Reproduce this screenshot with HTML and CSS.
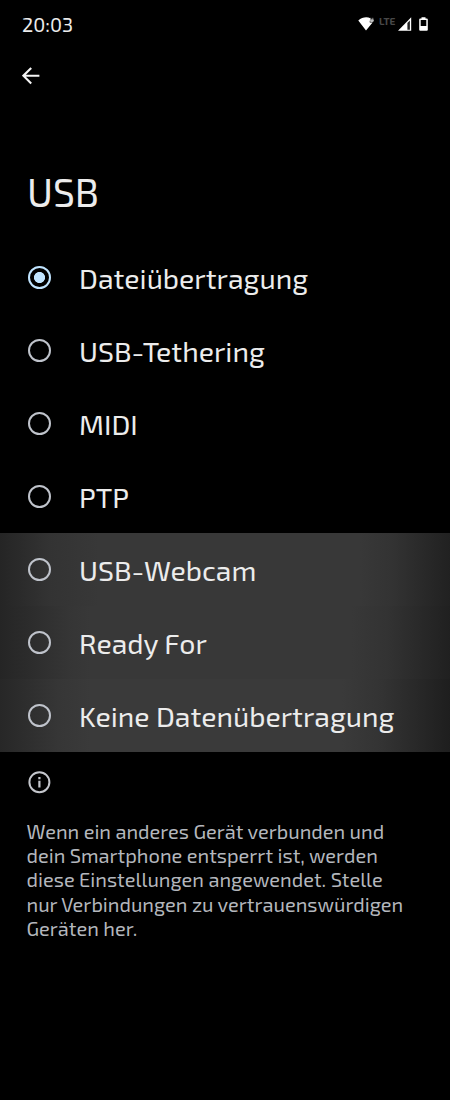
FILE: index.html
```html
<!DOCTYPE html>
<html lang="de">
<head>
  <meta charset="UTF-8" />
  <meta name="viewport" content="width=device-width, initial-scale=1.0" />
  <title>USB</title>
  <link rel="stylesheet" href="styles.css">
</head>
<body>
  <header class="status-bar">
    <span class="clock">20:03</span>
    <div class="status-icons">
      <svg class="wifi" width="17" height="15" viewBox="0 0 17 15">
        <path d="M0.3 3.6C4 -0.3 9.5 -0.5 12.4 1.2L11.6 5.2L14.2 6L8 13.6Z" fill="#fff" />
        <path d="M12.8 3.5V0.8M14.8 3.5V0.8M12.3 2.8H15.3V4.3L13.8 5.4L12.3 4.3Z" fill="#bbb" stroke="#ccc" stroke-width="0.7" />
      </svg>
      <span class="lte">LTE</span>
      <svg class="signal" width="14" height="14" viewBox="0 0 14 14">
        <path d="M0 13.7L13.2 0.3V13.7Z" fill="#fff" />
        <path d="M9.4 6L11.9 3.5V12.7H9.4Z" fill="#222" />
      </svg>
      <svg class="battery" width="9" height="14" viewBox="0 0 9 14">
        <path d="M2.5 0.2H6.5V1.4H7.8Q8.8 1.4 8.8 2.4V12.8Q8.8 13.8 7.8 13.8H1.2Q0.2 13.8 0.2 12.8V2.4Q0.2 1.4 1.2 1.4H2.5Z" fill="#fff" />
        <path d="M1.7 3H7.3V9H1.7Z" fill="#000" />
      </svg>
    </div>
  </header>

  <nav class="toolbar">
    <svg width="18" height="18" viewBox="0 0 18 18">
      <path d="M17.4 8.7H1.5M9.2 0.9L1.4 8.7L9.2 16.5" fill="none" stroke="#f4f4f4" stroke-width="2.1" />
    </svg>
  </nav>

  <main>
    <h1 class="title">USB</h1>

    <ul class="options">
      <li class="option checked"><span class="radio"></span><span class="label">Dateiübertragung</span></li>
      <li class="option"><span class="radio"></span><span class="label">USB-Tethering</span></li>
      <li class="option"><span class="radio"></span><span class="label">MIDI</span></li>
      <li class="option"><span class="radio"></span><span class="label">PTP</span></li>
      <li class="option pressed"><span class="radio"></span><span class="label">USB-Webcam</span></li>
      <li class="option pressed wide"><span class="radio"></span><span class="label">Ready For</span></li>
      <li class="option pressed low"><span class="radio"></span><span class="label">Keine Datenübertragung</span></li>
    </ul>

    <section class="info">
      <svg width="23" height="23" viewBox="0 0 23 23">
        <circle cx="11.4" cy="11.2" r="10" fill="none" stroke="#c4c6cc" stroke-width="2" />
        <path d="M10.3 6H12.5V8.2H10.3ZM10.3 9.8H12.5V16.6H10.3Z" fill="#c4c6cc" />
      </svg>
      <p class="info-text">
        Wenn ein anderes Gerät verbunden und dein Smartphone entsperrt ist, werden
        diese Einstellungen angewendet. Stelle nur Verbindungen zu
        vertrauenswürdigen Geräten her.
      </p>
    </section>
  </main>
</body>
</html>
```
FILE: styles.css
```css
* {
  margin: 0;
  padding: 0;
  box-sizing: border-box;
}

body {
  font-family: 'Exo 2', Roboto, sans-serif;
  background: #000;
  color: #ececec;
  min-height: 100vh;
}

.status-bar {
  display: flex;
  justify-content: space-between;
  height: 50px;
  padding: 0 22px;
}

.clock {
  font-size: 20px;
  line-height: 48px;
}

.status-icons {
  display: flex;
  padding-top: 17px;
}

.lte {
  width: 18px;
  margin: 0 1px 0 4px;
  font-size: 10px;
  font-weight: bold;
  line-height: 8px;
  color: #484848;
}

.battery {
  margin-left: 7px;
}

.toolbar {
  height: 50px;
  padding: 17px 0 0 22px;
}

.toolbar svg {
  display: block;
}

.title {
  height: 141px;
  padding: 67px 0 0 27px;
  font-size: 39px;
  font-weight: normal;
  line-height: 50px;
}

.options {
  list-style: none;
}

.option {
  display: flex;
  align-items: center;
  height: 73px;
  padding-left: 28px;
}

.radio {
  width: 23px;
  height: 23px;
  border: 2px solid #bfc3cb;
  border-radius: 50%;
}

.checked .radio {
  border-color: #c0e4ff;
  background: radial-gradient(circle, #c0e4ff 5.2px, transparent 5.9px);
}

.label {
  margin-left: 28px;
  font-size: 28.45px;
  line-height: 36px;
  white-space: nowrap;
}

.pressed {
  background: linear-gradient(90deg, #252525, #333 11%, #383838 22%, #383838 80%, #333 87%, #212121);
}

.pressed.wide {
  background: linear-gradient(90deg, #252525, #353535 15%, #383838 20%, #383838 78%, #333 86%, #202020);
}

.pressed.low {
  background: linear-gradient(90deg, #272727, #363636 13%, #3a3a3a 20%, #3a3a3a 76%, #333 85%, #1e1e1e);
}

.info {
  padding: 19px 0 0 28px;
}

.info svg {
  display: block;
}

.info-text {
  width: 386px;
  margin: 25px 0 0 -1.5px;
  font-size: 20.04px;
  line-height: 24.2px;
  color: #b4b7bd;
}
```
